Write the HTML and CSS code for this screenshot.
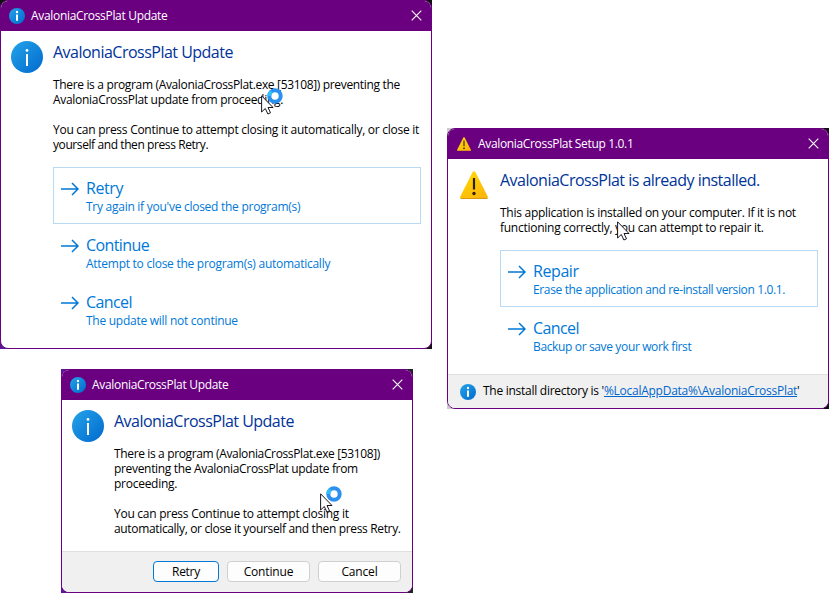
FILE: index.html
```
<!DOCTYPE html>
<html lang="en">
<head>
<meta charset="utf-8">
<title>AvaloniaCrossPlat dialogs</title>
<link rel="stylesheet" href="styles.css">
</head>
<body>
<svg width="0" height="0" class="defs">
  <defs>
    <linearGradient id="blue" x1="0" y1="0" x2="1" y2="1"><stop offset="0" stop-color="#25a4ea"/><stop offset="1" stop-color="#0069cd"/></linearGradient>
    <linearGradient id="gold" x1="0" y1="0" x2="0.6" y2="1"><stop offset="0" stop-color="#ffdb00"/><stop offset="1" stop-color="#fdb90b"/></linearGradient>
    <symbol id="info" viewBox="0 0 32 32"><circle cx="16" cy="16" r="16" fill="url(#blue)"/><circle cx="16" cy="9.400" r="1.400" fill="#fff"/><path d="M16 13v12" stroke="#fff" stroke-width="2"/></symbol>
    <symbol id="info-small" viewBox="0 0 16 16"><circle cx="8" cy="8" r="8" fill="url(#blue)"/><circle cx="8" cy="4" r="1.200" fill="#fff"/><path d="M8 6.400v6.400" stroke="#fff" stroke-width="2"/></symbol>
    <symbol id="warn" viewBox="0 0 28 28"><path d="M14 1.800 26.400 26.200H1.600Z" fill="url(#gold)" stroke="url(#gold)" stroke-width="3" stroke-linejoin="round"/><path d="M1 27.500h26" stroke="#d99a10" stroke-width="1" stroke-linecap="round"/><path d="M14 7v11.500" stroke="#2b2300" stroke-width="2.200"/><circle cx="14" cy="22.500" r="1.700" fill="#2b2300"/></symbol>
    <symbol id="arrow" viewBox="0 0 18 14"><path d="M0 7h17M11 1l6 6-6 6" fill="none" stroke="#0078d7" stroke-width="1.500"/></symbol>
    <symbol id="close" viewBox="0 0 11 11"><path d="M.7.7l9.600 9.600M10.300.7.7 10.300" stroke="#fff" stroke-width="1.100"/></symbol>
    <symbol id="pointer" viewBox="0 0 13 20"><path d="M.6.8v16.200l3.700-3.500 2.600 5.500 2.600-1.200-2.500-5.300h5Z" fill="#fff" stroke="#15151f" stroke-width="1"/></symbol>
    <symbol id="ring" viewBox="0 0 16 16"><circle cx="8" cy="8" r="5.700" fill="#fff" stroke="#2b90ee" stroke-width="4"/><path d="M2.300 8a5.700 5.700 0 0 1 2.200-4.500" fill="none" stroke="#33bdf8" stroke-width="4"/></symbol>
  </defs>
</svg>
<main class="desk">
  <div class="column left">
    <div class="frame frame-a">
      <section class="window">
        <header class="bar"><svg class="bar-icon"><use href="#info-small"/></svg><span class="caption t32">AvaloniaCrossPlat Update</span><svg class="close"><use href="#close"/></svg></header>
        <div class="body">
          <svg class="big-icon"><use href="#info"/></svg>
          <div class="content">
            <h1>AvaloniaCrossPlat Update</h1>
            <p><span class="t34">There is a program (AvaloniaCrossPlat.exe [53108]) preventing the</span><br><span class="t30">AvaloniaCrossPlat update from proceeding.</span></p>
            <p><span class="t26">You can press Continue to attempt closing it automatically, or close it</span><br><span class="t41">yourself and then press Retry.</span></p>
            <div class="commands">
              <div class="command focused"><svg class="arrow"><use href="#arrow"/></svg><div><h2>Retry</h2><small class="t26">Try again if you've closed the program(s)</small></div></div>
              <div class="command"><svg class="arrow"><use href="#arrow"/></svg><div><h2 class="t60">Continue</h2><small class="t26">Attempt to close the program(s) automatically</small></div></div>
              <div class="command"><svg class="arrow"><use href="#arrow"/></svg><div><h2 class="t60">Cancel</h2><small class="t26">The update will not continue</small></div></div>
            </div>
          </div>
        </div>
        <div class="cursor cursor-a"><svg class="pointer"><use href="#pointer"/></svg><svg class="ring"><use href="#ring"/></svg></div>
      </section>
    </div>
    <div class="frame frame-c">
      <section class="window">
        <header class="bar"><svg class="bar-icon"><use href="#info-small"/></svg><span class="caption t32">AvaloniaCrossPlat Update</span><svg class="close"><use href="#close"/></svg></header>
        <div class="body">
          <svg class="big-icon"><use href="#info"/></svg>
          <div class="content">
            <h1>AvaloniaCrossPlat Update</h1>
            <p><span class="t36">There is a program (AvaloniaCrossPlat.exe [53108])</span><br><span class="t32">preventing the AvaloniaCrossPlat update from</span><br><span class="t26">proceeding.</span></p>
            <p><span class="t26">You can press Continue to attempt closing it</span><br><span class="t34">automatically, or close it yourself and then press Retry.</span></p>
          </div>
        </div>
        <footer class="buttons"><span class="button primary">Retry</span><span class="button">Continue</span><span class="button">Cancel</span></footer>
        <div class="cursor cursor-c"><svg class="pointer"><use href="#pointer"/></svg><svg class="ring"><use href="#ring"/></svg></div>
      </section>
    </div>
  </div>
  <div class="column right">
    <div class="frame frame-b">
      <section class="window">
        <header class="bar"><svg class="bar-icon small-warn"><use href="#warn"/></svg><span class="caption t34">AvaloniaCrossPlat Setup 1.0.1</span><svg class="close"><use href="#close"/></svg></header>
        <div class="body">
          <svg class="big-icon warn"><use href="#warn"/></svg>
          <div class="content">
            <h1>AvaloniaCrossPlat is already installed.</h1>
            <p><span class="t26">This application is installed on your computer. If it is not</span><br><span class="t26">functioning correctly, you can attempt to repair it.</span></p>
            <div class="commands">
              <div class="command focused"><svg class="arrow"><use href="#arrow"/></svg><div><h2>Repair</h2><small class="t36">Erase the application and re-install version 1.0.1.</small></div></div>
              <div class="command"><svg class="arrow"><use href="#arrow"/></svg><div><h2 class="t60">Cancel</h2><small class="t36">Backup or save your work first</small></div></div>
            </div>
          </div>
        </div>
        <footer class="note"><svg class="note-icon"><use href="#info-small"/></svg><span class="note-text t26">The install directory is '<u>%LocalAppData%\AvaloniaCrossPlat</u>'</span></footer>
        <div class="cursor cursor-b"><svg class="pointer"><use href="#pointer"/></svg></div>
      </section>
    </div>
  </div>
</main>
</body>
</html>
```
FILE: styles.css
```
* { box-sizing: border-box; }
body { margin: 0; width: 829px; height: 593px; overflow: hidden; background: #fff; color: #000; font: 12px/15px "Open Sans", "Noto Sans", sans-serif; white-space: nowrap; }
.defs { position: absolute; }
svg { display: block; flex: none; }
h1, h2, p { margin: 0; font-weight: 400; }
.desk { display: flex; gap: 15px; }
.column { display: flex; flex-direction: column; }
.left { width: 432px; gap: 20px; }
.right { padding-top: 128px; }
.frame { display: flex; }
.frame-a { width: 432px; height: 349px; background: linear-gradient(#111 50%, transparent 50%), linear-gradient(90deg, #5a1599 50%, #111 50%); }
.frame-b { width: 382px; height: 281px; background: linear-gradient(90deg, #ccc 50%, #111 50%); }
.frame-c { width: 352px; height: 224px; margin-left: 61px; background: linear-gradient(90deg, #5a1599 50%, #222 50%); }
.window { position: relative; flex: 1; min-width: 0; display: flex; flex-direction: column; overflow: hidden; border: 1px solid #6a0080; border-radius: 8px; background: #fff; }
.bar { display: flex; align-items: center; height: 30px; flex: none; padding: 0 9px 0 8px; background: #6a0080; color: #fff; }
.bar-icon { width: 16px; height: 16px; }
.small-warn { width: 14px; height: 14px; margin: 0 1px 1px; }
.caption { flex: 1; margin-left: 6px; padding-bottom: 2px; }
.close { width: 11px; height: 11px; margin-bottom: 2px; }
.body { flex: 1; display: flex; padding: 10px 10px 0; }
.big-icon { width: 32px; height: 32px; }
.big-icon.warn { width: 28px; height: 28px; margin: 2px 2px 0; }
.content { flex: 1; min-width: 0; margin-left: 10px; }
h1 { font-size: 16px; line-height: 22px; color: #003399; margin-bottom: 14px; letter-spacing: -0.51px; }
p { margin-bottom: 15px; }
.command { display: flex; height: 57px; padding: 10px 7px; border: 1px solid transparent; color: #0078d7; }
.focused { border-color: #b9daf5; }
.arrow { width: 18px; height: 14px; margin: 4px 7px 0 0; }
h2 { font-size: 16px; line-height: 21px; letter-spacing: -0.42px; }
small { display: block; font-size: 12px; line-height: 15px; }
.buttons { display: flex; justify-content: flex-end; gap: 8px; height: 41px; padding: 9px 11px; border-top: 1px solid #dfdfdf; background: #f0f0f0; }
.button { width: 83px; height: 21px; border: 1px solid #d0d0d0; border-radius: 4px; background: #fdfdfd; text-align: center; line-height: 19px; letter-spacing: -0.15px; }
.primary { width: 66px; border-color: #0078d4; letter-spacing: -0.3px; }
.note { display: flex; align-items: center; gap: 7px; height: 34px; padding: 0 12px; border-top: 1px solid #dfdfdf; background: #f0f0f0; }
.note-icon { width: 16px; height: 16px; }
.note-text { padding-bottom: 2px; }
.note u { color: #0066cc; }
.cursor { position: absolute; }
.cursor-a { left: 260px; top: 94px; }
.cursor-b { left: 169px; top: 92px; }
.cursor-c { left: 258px; top: 123px; }
.pointer { width: 13px; height: 20px; }
.ring { position: absolute; left: 6px; top: -7px; width: 16px; height: 16px; }

/* tracking steps, in hundredths of a pixel */
.t26 { letter-spacing: -0.265px; }
.t30 { letter-spacing: -0.3px; }
.t32 { letter-spacing: -0.32px; }
.t34 { letter-spacing: -0.34px; }
.t36 { letter-spacing: -0.36px; }
.t41 { letter-spacing: -0.41px; }
.t60 { letter-spacing: -0.6px; }
```
